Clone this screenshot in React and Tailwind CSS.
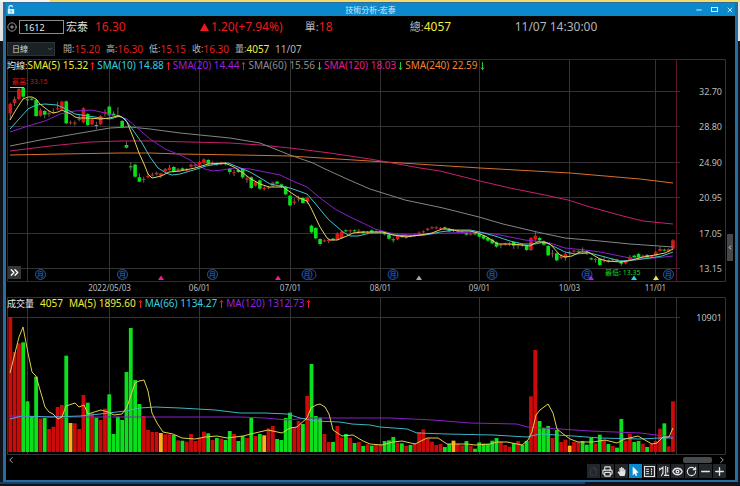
import {
  ChevronDown, ChevronLeft, ChevronRight, ChevronsRight, CirclePlus,
  Eye, File, Minus, Plus, Printer, RotateCw, X,
} from 'lucide-react';
import { FaHandPaper, FaMousePointer } from 'react-icons/fa';

const RED = '#cc0a0a';
const GREEN = '#0be01c';
const YELLOW = '#ffae1a';

// one letter per trading day: r = up, g = down, y = flat
const DAYS =
  'rrrgggg' + 'rgrrrrgyrrrgrgrrgggg' + 'ggggrrrryrrgrgr' +
  'rrrrgrgrggrggrgrgyrrggggrrgrgggrrgrrgrgrgr' +
  'grrgggrgrgrrrrrrrggyrrgrgggggg' + 'rrrgrggrrgggrgrryrrgggrgrgrggrrgg' + 'rgrrrgrr';

// bar heights, 405 = 10901 lots
const VOLUMES = [
  405, 300, 326, 329, 152, 106, 226, 101, 102, 69, 76, 135, 141, 289, 87, 86, 69, 171, 148, 116,
  103, 96, 130, 173, 54, 106, 96, 240, 372, 216, 144, 108, 66, 60, 60, 57, 53, 53, 51, 35,
  34, 31, 54, 33, 43, 61, 56, 36, 42, 40, 36, 63, 54, 33, 48, 42, 103, 48, 54, 50,
  71, 78, 39, 36, 102, 118, 74, 93, 84, 168, 264, 108, 103, 54, 30, 30, 78, 43, 54, 43,
  27, 30, 18, 23, 19, 22, 22, 33, 35, 45, 28, 26, 19, 21, 26, 60, 68, 41, 31, 21,
  24, 15, 24, 34, 24, 20, 33, 19, 10, 29, 25, 24, 34, 42, 31, 21, 16, 27, 33, 22,
  33, 167, 306, 93, 72, 78, 42, 66, 30, 37, 19, 30, 29, 33, 22, 42, 26, 52, 36, 24,
  18, 13, 99, 34, 54, 30, 33, 25, 15, 24, 33, 70, 86, 17, 152,
];

// [top, bottom, high, low] with three steps to a unit, counted down from the base line
const segment = (base, rows) =>
  rows.map(([top, bottom, high = top - 3, low = bottom + 3]) =>
    [top, bottom, high, low].map((v) => base + v / 3));

const CANDLES = [
  ...segment(70, [
    [102, 130, 98, 150], [87, 99, 80, 108], [57, 87], [53, 80, 53, 88], [88, 90, 85, 105],
    [86, 89], [90, 138], [121, 137, 115, 140], [123, 134, 120, 145], [129, 133, 122, 140],
    [126, 129, 115, 131], [115, 118, 95, 121], [95, 118], [94, 160], [157, 159, 152, 164],
    [158, 160, 152, 167], [147, 150, 135, 154], [115, 157], [132, 165], [148, 163],
    [165, 168, 155, 178], [138, 163], [126, 129, 118, 140], [110, 136, 106, 140], [131, 137, 124, 138],
    [135, 139, 112, 140], [153, 171], [225, 233, 215, 235], [289, 292, 277, 302], [284, 320],
    [322, 335, 310, 337], [327, 330, 320, 338], [318, 321, 310, 325], [314, 317, 308, 320], [308, 313],
    [310, 317, 308, 324], [297, 303], [293, 300, 285, 302], [291, 305], [297, 302],
  ]),
  ...segment(130, [
    [115, 120], [117, 122], [104, 110], [104, 108], [96, 104],
    [88, 99], [90, 101], [97, 101], [100, 104], [98, 103], [99, 103], [116, 126, 114, 133],
    [127, 130, 120, 138], [120, 126], [117, 142, 114, 147], [145, 149, 138, 158], [142, 174],
    [156, 167, 152, 170], [151, 176], [174, 177, 168, 182], [172, 175], [158, 168], [155, 161],
    [163, 171], [170, 193], [197, 226], [215, 219, 205, 225], [206, 209, 197, 215],
    [204, 219], [204, 214, 200, 222], [287, 307], [294, 325], [327, 342, 325, 348],
    [331, 334], [329, 333, 326, 340], [326, 330], [310, 328], [305, 324], [301, 304],
    [301, 304, 298, 310], [301, 304], [302, 306, 297, 308], [305, 309], [306, 310],
  ]),
  ...segment(200, [
    [91, 97], [93, 96], [93, 96], [97, 103], [104, 116], [118, 121, 112, 128], [107, 117],
    [108, 111], [108, 113], [106, 109], [104, 107], [98, 101, 94, 104], [94, 97], [86, 90],
    [82, 85], [82, 85], [84, 87], [82, 86], [87, 94], [90, 93], [92, 95], [95, 98],
    [100, 104], [101, 104], [100, 103], [102, 110], [107, 116], [114, 122], [119, 130],
    [127, 140], [134, 137, 130, 145], [131, 134], [131, 134, 126, 138], [126, 137, 124, 147],
    [134, 137, 128, 146], [134, 137], [138, 150], [114, 150], [108, 118, 95, 125],
    [114, 121, 110, 124], [124, 134], [138, 166], [160, 163, 150, 172], [160, 181],
    [169, 174, 162, 178], [162, 174, 158, 182], [157, 160, 154, 166], [152, 155], [153, 156],
    [148, 151, 142, 155], [155, 158, 152, 165], [175, 178, 172, 181], [177, 180, 174, 188],
    [176, 195], [180, 183, 170, 188], [182, 185], [178, 181], [179, 182], [183, 191, 180, 198],
    [185, 190], [171, 180, 165, 181], [167, 171], [162, 173], [167, 170], [165, 172],
    [168, 171], [157, 167, 153, 168], [147, 153, 140, 154], [149, 152], [148, 154], [121, 146],
  ]),
];

const PRICE_LINES = [
  ['#d9702a', '10,155 60,154 120,153 150,153 180,154 240,155 290,156 370,161 480,168 570,173 640,179 673,183'],
  ['#c8206e', '10,151 50,146 90,142 120,141 150,141 190,142 230,143 260,145 290,148 330,153 370,159 420,168 440,171 460,176 480,181 510,188 540,194 568,200 590,207 623,216 643,221 673,224'],
  ['#858585', '10,146 40,140 75,134 110,128 130,127 150,129 180,133 230,138 260,143 290,155 313,163 323,168 347,179 370,189 405,200 443,208 479,217 503,224 537,232 565,238 600,241 630,244 673,247'],
  ['#8a1fc9', '10,132 28,126 45,121 60,114 75,111 92,110 105,113 120,117 127,119 135,126 150,139 165,149 180,155 190,160 197,165 205,169 213,171 222,170 235,168 250,169 265,172 280,175 295,182 307,187 320,198 335,209 350,217 365,224 375,229 390,233 410,235 430,234 450,233 475,232 495,234 510,237 525,240 535,241 550,243 565,248 585,250 600,252 615,255 630,258 655,258 673,256'],
  ['#3fc4cf', '10,129 19,119 28,109 36,105 45,104 57,105 66,109 75,114 88,116 101,118 110,119 120,116 125,119 133,130 142,143 150,157 158,168 166,173 172,175 180,174 190,171 197,169 206,166 218,164 228,163 238,167 250,172 262,179 270,184 280,186 290,188 307,194 314,202 328,219 343,232 350,236 358,236 370,233 383,233 395,235 410,236 425,235 440,232 455,230 470,230 480,232 495,236 510,241 523,244 535,244 545,242 555,247 565,252 575,254 590,253 605,257 620,261 635,260 650,258 662,256 673,252'],
  ['#e8d35a', '10,120 14,113 19,105 23,99 28,97 32,97 36,99 40,104 45,108 49,111 53,113 58,112 62,110 66,112 71,114 75,117 79,118 88,118 101,119 109,118 118,116 122,117 127,122 131,132 135,142 139,153 144,164 148,174 152,178 157,177 161,176 165,174 169,172 180,171 195,168 208,164 225,163 234,167 243,173 251,179 260,184 269,187 283,187 290,192 299,198 307,201 311,208 320,227 327,238 330,240 337,240 342,238 347,236 353,233 363,232 383,232 393,235 406,237 420,235 432,233 442,229 449,229 458,231 470,231 478,233 487,237 498,244 510,244 523,245 530,246 537,242 543,242 550,244 560,255 565,257 572,256 580,252 588,252 600,259 607,261 621,262 628,261 643,257 655,255 665,253 673,249'],
];

const VOLUME_LINES = [
  ['#8a1fc9', '10,416 60,417 190,417 240,417 265,418 287,420 310,418 360,418 390,418 433,420 470,423 517,424 527,427 560,429 590,431 640,433 673,437'],
  ['#3fb4c4', '10,419 22,416 50,417 80,416 100,414 125,411 140,408 155,407 180,408 215,410 240,413 265,413 287,414 300,418 315,421 340,422 352,424 370,425 380,427 407,429 417,433 447,434 493,435 527,437 540,434 557,435 573,436 600,438 640,439 660,438 673,438'],
  ['#ddd04a', '10,373 19,337 23,327 28,353 32,372 36,376 45,407 49,412 53,414 58,419 62,417 66,406 75,403 79,407 84,405 88,414 101,410 108,412 114,415 122,414 127,407 135,383 139,381 144,380 148,391 152,413 157,423 163,432 173,434 182,438 195,439 205,437 217,436 227,438 243,436 255,433 268,430 282,433 290,428 297,427 307,418 311,408 316,405 320,404 325,407 329,414 333,430 342,436 353,435 363,441 370,444 382,445 393,442 402,441 415,444 427,438 438,438 447,444 467,444 475,445 490,444 497,442 507,442 522,445 528,440 532,432 536,415 540,410 548,404 553,413 557,429 562,433 570,439 578,442 593,442 605,440 617,443 625,439 638,436 645,440 652,444 657,443 663,437 669,437 673,428'],
];

const MONTHS = [
  [27.5, ''], [109.5, '2022/05/03'], [199.5, '06/01'], [290.5, '07/01'],
  [380.5, '08/01'], [479.5, '09/01'], [569.5, '10/03'], [655.5, '11/01'],
];
const PRICES = [[91.5, '32.70'], [126.5, '28.80'], [162.5, '24.90'], [197.5, '20.95'], [233.5, '17.05'], [268.5, '13.15']];
const BADGES = [40.5, 122.5, 212.5, 307, 393, 492, 587, 668.5];
const EVENTS = [
  [161, '#f01c9c'], [278, '#f01c9c'], [419, '#a9a9a9'], [591, '#a626f0'], [634, '#2fd3e8'], [656, '#f0e04a'],
];

const SMA = [
  ['SMA(5) 15.32', true, 'text-[#f0ec3c]'],
  ['SMA(10) 14.88', true, 'text-[#35cfe0]'],
  ['SMA(20) 14.44', true, 'text-[#9a22dc]'],
  ['SMA(60) 15.56', false, 'text-[#8c8c8c]'],
  ['SMA(120) 18.03', false, 'text-[#e01f8e]'],
  ['SMA(240) 22.59', false, 'text-[#f0842c]'],
];
const VOLUME_MA = [
  ['MA(5) 1895.60', true, 'text-[#f0ec3c]'],
  ['MA(66) 1134.27', true, 'text-[#35cfe0]'],
  ['MA(120) 1312.73', true, 'text-[#9a22dc]'],
];
const OHLC = [
  ['開', '15.20', 'text-[#e81c1c]'],
  ['高', '16.30', 'text-[#e81c1c]'],
  ['低', '15.15', 'text-[#e81c1c]'],
  ['收', '16.30', 'text-[#e81c1c]'],
  ['量', '4057', 'text-[#f0ec3c]'],
];

const dayX = (i) => 10.3 + i * 4.303;

const Trend = ({ up }) => (
  <svg viewBox="0 0 5 10" className={up ? 'h-[10px] w-[5px] text-[#e81c1c]' : 'h-[10px] w-[5px] rotate-180 text-[#1fc93a]'}>
    <path d="M2.5 1.5V9M1 3.5L2.5 1.2 4 3.5" fill="none" stroke="currentColor" />
  </svg>
);

const Legend = ({ items }) =>
  items.map(([text, up, color]) => (
    <span key={text} className={`flex items-center gap-[2px] ${color}`}>
      {text}
      <Trend up={up} />
    </span>
  ));

const Lines = ({ items }) =>
  items.map(([color, points]) => (
    <polyline key={color} points={points} fill="none" stroke={color} strokeWidth="1" strokeLinejoin="round" />
  ));

const PriceChart = () => (
  <svg viewBox="6 59 729 238" className="block h-auto w-full">
    <g stroke="#333333">
      {PRICES.map(([y]) => <path key={y} d={`M7 ${y}H680`} />)}
      {MONTHS.map(([x]) => <path key={x} d={`M${x} 59V281`} />)}
      <path d="M676 59.5H725.5V281.5H676" fill="none" />
    </g>
    <path d="M7.5 281.5V59.5H676.5V281.5Z" fill="none" stroke="#5a1630" />

    {CANDLES.map(([top, bottom, high, low], i) => (
      <g key={i} fill={DAYS[i] === 'g' ? GREEN : '#d81818'}>
        <path d={`M${dayX(i)} ${high}V${low}`} stroke="#8a8078" strokeWidth=".8" />
        <rect x={dayX(i) - 1.8} y={top} width="3.6" height={Math.max(bottom - top, 1)} />
      </g>
    ))}
    <Lines items={PRICE_LINES} />
    <path d="M10 87.5H24" stroke="#d8c850" />
    <text x="12" y="84" fontSize="7" fill="#d01a1a">最高: 33.15</text>
    <text x="605" y="275" fontSize="7" fill="#14d828">最低: 13.35</text>

    <circle cx="311" cy="274.5" r="5" fill="none" stroke="#7a1fae" />
    {BADGES.map((x) => (
      <g key={x}>
        <circle cx={x} cy="274.5" r="5" fill="#020a18" stroke="#1f57aa" />
        <text x={x} y="277" fontSize="7" textAnchor="middle" fill="#2f6cc8">月</text>
      </g>
    ))}
    {EVENTS.map(([x, color]) => <path key={x} d={`M${x} 275.5L${x + 3} 280H${x - 3}Z`} fill={color} />)}

    {MONTHS.map(([x, label]) => (
      <text key={x} x={x} y="291" fontSize="8" textAnchor="middle" fill="#bcbcbc">{label}</text>
    ))}
    {PRICES.map(([y, label]) => (
      <text key={y} x="722" y={y + 3} fontSize="9" textAnchor="end" fill="#bcbcbc">{label}</text>
    ))}
  </svg>
);

const VolumeChart = () => (
  <svg viewBox="6 297 729 158" className="block h-auto w-full">
    <g stroke="#333333" fill="none">
      <path d="M7 317.5H680" />
      {MONTHS.map(([x]) => <path key={x} d={`M${x} 298V454`} />)}
      <path d="M676.5 298V454" />
      <path d="M7.5 297.5H725.5V454.5H7.5Z" />
    </g>
    {VOLUMES.map((v, i) => (
      <rect
        key={i}
        x={dayX(i) - 1.9}
        y={452 - v / 3}
        width="3.8"
        height={v / 3}
        fill={{ r: RED, g: GREEN, y: YELLOW }[DAYS[i]]}
      />
    ))}
    <Lines items={VOLUME_LINES} />
    <text x="722" y="321" fontSize="9" textAnchor="end" fill="#bcbcbc">10901</text>
  </svg>
);

const LockIcon = () => (
  <svg viewBox="0 0 8 9" className="h-[9px] w-[8px] text-[#e4f2fa]">
    <path d="M2 4V2.500A1.800 1.800 0 0 1 5.600 2.200" fill="none" stroke="currentColor" strokeWidth="1.200" />
    <path d="M.8 4H7.200V8.800H.8Z" fill="currentColor" />
    <path d="M4 5.500V7.300" stroke="#0c88cc" />
  </svg>
);

const ListIcon = () => (
  <svg viewBox="0 0 10 10" className="size-[11px]" fill="none" stroke="currentColor">
    <path d="M.5 .5H9.500V9.500H.5Z" />
    <path d="M2 3H4.500M2 5H4.500M2 7H4.500M6.800 2V4M6.800 4.500V6M6.800 6.500V8" />
  </svg>
);

const CandleIcon = () => (
  <svg viewBox="0 0 10 10" className="size-[11px]" fill="none" stroke="currentColor">
    <path d="M1.500 1.500V4M1.500 3.500L4.500 1V7M3 9L4.500 6M7 0V8.500M5.500 8.500H10M8.800 1V6" />
  </svg>
);

const TOOLS = [
  ['Export', <File size={9} className="text-[#3c4248]" />],
  ['Print', <Printer size={11} strokeWidth={2.5} />],
  ['Pan', <FaHandPaper size={9} />],
  ['Select', <FaMousePointer size={9} />],
  ['Data list', <ListIcon />],
  ['Indicators', <CandleIcon />],
  ['Show', <Eye size={11} strokeWidth={3} />],
  ['Reload', <RotateCw size={11} strokeWidth={2.5} />],
  ['Zoom out', <Minus size={13} strokeWidth={2.5} />],
  ['Zoom in', <Plus size={13} strokeWidth={2.5} />],
];

const Quote = ({ label, value, color }) => (
  <div className="flex items-center">
    <span className="text-[11px] text-[#b4b4b4]">{label}:</span>
    <span className={color}>{value}</span>
  </div>
);

export default function App() {
  return (
    <div className="min-h-screen bg-[linear-gradient(#e4e6e8_0_41px,#10131a_41px)] font-['Noto_Sans','Noto_Sans_CJK_TC',sans-serif]">
      <div className="flex h-[2px]">
        <div className="w-[50px] bg-[#f4f4f0]" />
        <div className="flex-1 bg-[#f3dc6a]" />
      </div>

      <main className="mr-[2px] ml-[3px] border-x-3 border-t border-b-2 border-[#2a6c9c] bg-black">
        <header className="grid h-[13px] grid-cols-3 items-center bg-[#0c88cc] px-px text-white">
          <LockIcon />
          <h1 className="text-center text-[8px] leading-[12px] text-[#d8ecf8]">技術分析-宏泰</h1>
          <div className="flex items-center justify-end gap-[8px] text-[#c4f0ff]">
            <button aria-label="Minimize"><Minus size={8} strokeWidth={3} /></button>
            <button aria-label="Maximize" className="h-[5px] w-[7px] border border-current" />
            <button aria-label="Close"><X size={8} strokeWidth={3} /></button>
          </div>
        </header>

        <section className="grid h-[22px] grid-cols-[89px_repeat(4,1fr)_2.1fr] items-center text-[12px] leading-[16px]">
          <div className="flex items-center gap-[2px] pl-px">
            <button aria-label="Add" className="text-[#b4b4b4]"><CirclePlus size={10} /></button>
            <input
              aria-label="Stock code"
              defaultValue="1612"
              className="h-[14px] w-[45px] border border-[#8c8c8c] bg-black px-[4px] text-[9px] leading-[12px] text-[#e8e8e8]"
            />
            <span className="text-[11px] text-[#dcdcdc]">宏泰</span>
          </div>
          <span className="text-[#e81c1c]">16.30</span>
          <div className="flex items-center gap-[2px] text-[#e81c1c]">
            <svg viewBox="0 0 9 8" className="h-[8px] w-[9px]"><path d="M4.500 0L9 8H0Z" fill="currentColor" /></svg>
            1.20(+7.94%)
          </div>
          <Quote label="單" value="18" color="text-[#e81c1c]" />
          <Quote label="總" value="4057" color="text-[#f0ec3c]" />
          <time className="text-[#b4b4b4]">11/07 14:30:00</time>
        </section>

        <section className="flex h-[21px] items-center pl-px text-[10px] leading-[14px]">
          <div className="relative mr-[8px]">
            <select
              aria-label="Period"
              className="block h-[14px] w-[48px] appearance-none border border-[#2c3438] bg-[#1a2226] pl-[4px] text-[8px] leading-[12px] text-[#d8d8d8]"
            >
              <option>日線</option>
            </select>
            <ChevronDown size={6} className="pointer-events-none absolute top-[4px] right-[2px] text-[#a0a0a0]" />
          </div>
          {OHLC.map(([label, value, color]) => (
            <span key={label} className="flex w-[43px] items-center">
              <span className="text-[9px] text-[#b4b4b4]">{label}:</span>
              <span className={color}>{value}</span>
            </span>
          ))}
          <time className="-ml-[3px] text-[#b4b4b4]">11/07</time>
        </section>

        <section className="relative">
          <PriceChart />
          <div className="absolute top-0 left-px flex items-center gap-[2px] text-[10px] leading-[13px] whitespace-nowrap">
            <span className="-mr-[2px] text-[9px] text-[#e8e8e8]">均線:</span>
            <Legend items={SMA} />
          </div>
          <button aria-label="Expand" className="absolute bottom-[18px] left-[2px] flex size-[13px] items-center justify-center bg-[#33373a] text-white">
            <ChevronsRight size={13} strokeWidth={2.5} />
          </button>
          <button aria-label="Open side panel" className="absolute right-[2px] bottom-[36px] flex h-[27px] w-[6px] items-center justify-center bg-[#45484b] text-white">
            <ChevronLeft size={7} strokeWidth={3} />
          </button>
        </section>

        <section className="relative">
          <VolumeChart />
          <div className="absolute top-0 left-px flex items-center gap-[2px] text-[10px] leading-[13px] whitespace-nowrap">
            <span className="text-[9px] text-[#e8e8e8]">成交量</span>
            <span className="px-[4px] text-[#f0ec3c]">4057</span>
            <Legend items={VOLUME_MA} />
          </div>
        </section>

        <div className="flex h-[9px] items-center pr-[8px] text-[#d0d0d0]">
          <button aria-label="Scroll left"><ChevronLeft size={10} /></button>
          <div className="flex flex-1 justify-end pr-[5px]">
            <div className="h-[6px] w-[29px] rounded-[2px] bg-[#484b4e]" />
          </div>
          <button aria-label="Scroll right"><ChevronRight size={10} /></button>
        </div>

        <nav className="mb-[2px] flex h-[14px] justify-end gap-px pr-[9px] text-[#e4e4e4]">
          {TOOLS.map(([name, icon]) => (
            <button
              key={name}
              aria-label={name}
              className={`flex w-[13px] items-center justify-center ${name === 'Select' ? 'bg-[#0c88cc] text-white' : 'bg-[#22272c]'}`}
            >
              {icon}
            </button>
          ))}
        </nav>
      </main>
      <div className="h-[2px] w-[79%] bg-[#12406e]" />
    </div>
  );
}
